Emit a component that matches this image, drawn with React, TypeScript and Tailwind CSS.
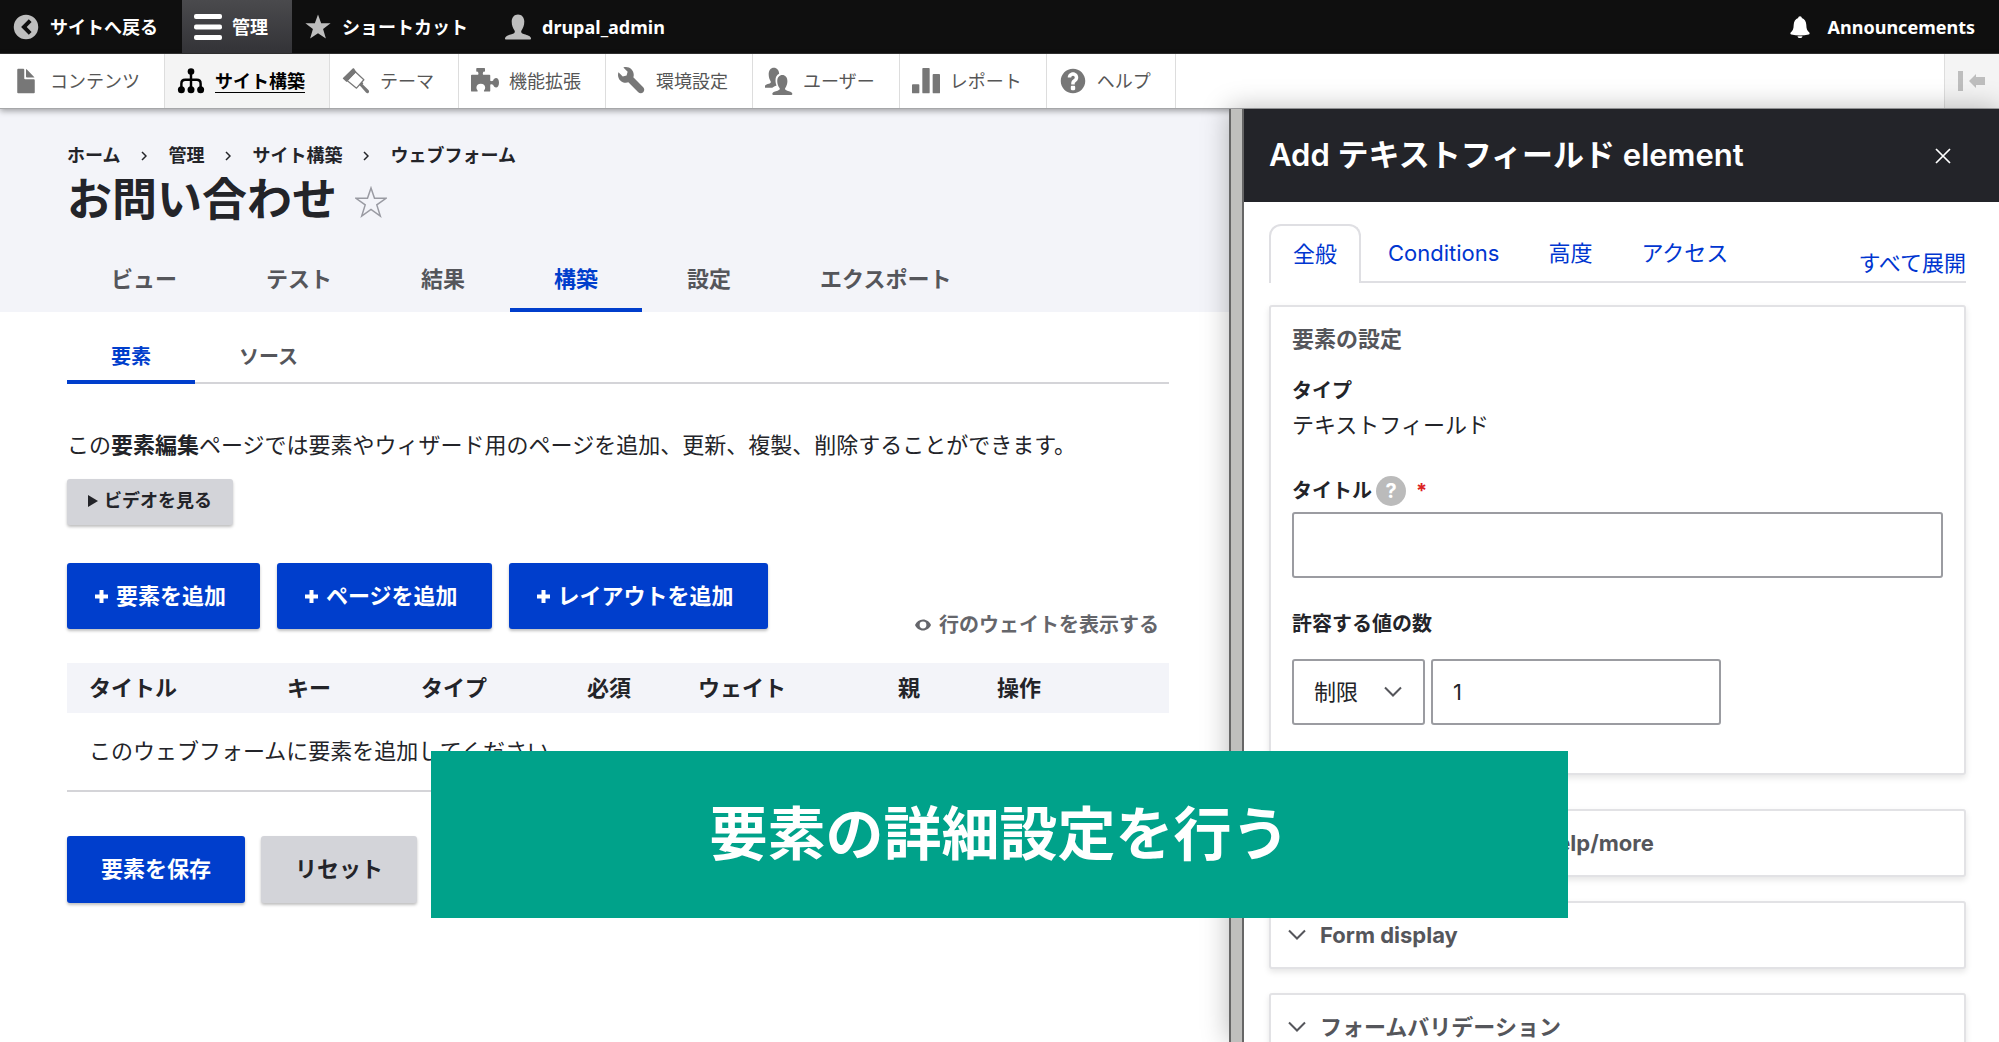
import type { ReactNode } from 'react';

const jp = "font-[Inter,'Noto_Sans_CJK_JP',sans-serif]";
const bar = "font-['Noto_Sans','Noto_Sans_CJK_JP',sans-serif]";

type IconProps = { className?: string };

function Svg({ children, className = 'size-7', box = '0 0 16 16' }: IconProps & { children: ReactNode; box?: string }) {
  return (
    <svg viewBox={box} className={`shrink-0 ${className}`} fill="currentColor" aria-hidden="true">
      {children}
    </svg>
  );
}

const BackIcon = () => (
  <Svg>
    <path fillRule="evenodd" d="M8 1a7 7 0 1 0 0 14A7 7 0 0 0 8 1zm1.6 11.4L5.2 8l4.4-4.4 1.6 1.6L8.4 8l2.8 2.8z" />
  </Svg>
);
const MenuIcon = () => (
  <Svg className="h-7 w-7" box="0 0 28 28">
    <rect y="1" width="28" height="5" rx="2" />
    <rect y="11.500" width="28" height="5" rx="2" />
    <rect y="22" width="28" height="5" rx="2" />
  </Svg>
);
const StarIcon = () => (
  <Svg>
    <path d="M8 .8l1.8 5h5.4l-4.3 3.4 1.6 5.4L8 11.500l-4.500 3.100 1.600-5.400L.8 5.800h5.400z" />
  </Svg>
);
const PersonIcon = () => (
  <Svg>
    <path d="M1.200 15.200c-.5 0-.7-.4-.6-.9.300-1.300 2.100-1.700 3.700-2.200 1.700-.5 2.200-1.100 1.700-2.100C5.200 8.900 4.400 7.300 4.400 4.900 4.400 2.400 5.900.8 8 .8s3.600 1.600 3.600 4.100c0 2.400-.8 4-1.600 5.100-.5 1 0 1.600 1.700 2.100 1.600.5 3.400.9 3.700 2.200.1.500-.1.900-.6.900z" />
  </Svg>
);
const BellIcon = () => (
  <Svg className="h-6 w-6">
    <path d="M8 .8c.7 0 1.200.5 1.200 1.200 1.900.6 2.900 2.300 3 4.500.1 2.700.5 4 2 5.100.4.300.3 1.200-.4 1.400-3.700.8-7.900.8-11.600 0-.7-.2-.8-1.100-.4-1.400 1.500-1.100 1.900-2.400 2-5.100.1-2.200 1.100-3.900 3-4.500C6.800 1.300 7.300.8 8 .8zM6.300 14.100h3.400c-.2.800-.8 1.300-1.700 1.300s-1.500-.5-1.700-1.300z" />
  </Svg>
);
const FileIcon = () => (
  <Svg>
    <path d="M12.502 7h-5c-.276 0-.502-.225-.502-.5v-5c0-.275-.225-.5-.5-.5h-3c-.276 0-.5.225-.5.5v13.029c0 .275.225.5.5.5h9.002c.275 0 .5-.225.5-.5v-7.029c0-.275-.225-.5-.5-.5zM8.502 6h4c.275 0 .34-.159.146-.354l-4.293-4.292c-.195-.195-.353-.129-.353.146v4c0 .275.225.5.5.5z" />
  </Svg>
);
const TreeIcon = () => (
  <Svg>
    <circle cx="8" cy="2.600" r="1.900" />
    <circle cx="2.500" cy="13" r="2" />
    <circle cx="8" cy="13" r="2" />
    <circle cx="13.500" cy="13" r="2" />
    <path d="M2.500 12V9.500Q2.500 7.300 4.700 7.300h6.600q2.200 0 2.200 2.200V12M8 3v9" fill="none" stroke="currentColor" strokeWidth="1.400" />
  </Svg>
);
const BrushIcon = () => (
  <Svg>
    <path d="M6.100.9L.7 6.100c-.3.300-.3.500 0 .8l1.900 1.700L8.200 2.800 6.900.9c-.2-.3-.5-.3-.8 0z" />
    <path d="M2.900 7.700l5.400 4.400 4.200-4.800L7.600 2.700z" fill="none" stroke="currentColor" strokeWidth=".7" strokeLinejoin="round" />
    <path d="M9.700 10.200l1.600-1.800.9.900-.4.600 3.300 3.300c.5.500.5 1.100.1 1.500-.4.400-1 .4-1.500-.1l-3-3.400z" />
  </Svg>
);
const PuzzleIcon = () => (
  <Svg>
    <path d="M0 4.900c0-.3.200-.5.500-.5h3.200c.5 0 .7-.4.500-.9L4 2.700h-.6c-.3 0-.4-.2-.4-.4V1c0-.3.200-.4.400-.4h4.200c.3 0 .4.200.4.400v1.300c0 .3-.2.400-.4.400H7l-.2.800c-.2.500 0 .9.500.9h3.200c.3 0 .5.200.5.500v2.500c0 .6.400.8 1 .6l.6-.2c.3-.9 1-1.500 1.700-1.500 1 0 1.700 1.100 1.700 2.700s-.7 2.700-1.700 2.700c-.7 0-1.400-.6-1.700-1.500l-.6-.2c-.6-.2-1 0-1 .6v2.900c0 .3-.2.500-.5.500H7.700c-.4 0-.4-.5-.1-.9.300-.4.500-.8.500-1.300 0-1.300-1-2.200-2.500-2.200s-2.500.9-2.500 2.200c0 .5.200.9.500 1.300.3.400.3.900-.1.900h-3c-.3 0-.5-.2-.5-.5z" />
  </Svg>
);
const WrenchIcon = () => (
  <Svg>
    <path d="M14.416 11.586l-.01-.008v-.001l-5.656-5.656c.15-.449.252-.921.252-1.421 0-2.485-2.016-4.500-4.502-4.500-.505 0-.981.102-1.434.255l2.431 2.431-.588 2.196-2.196.588-2.445-2.445c-.162.464-.268.956-.268 1.475 0 2.486 2.014 4.500 4.500 4.500.5 0 .972-.102 1.421-.251l5.667 5.665c.781.781 2.047.781 2.828 0s.781-2.047 0-2.828z" />
  </Svg>
);
const PeopleIcon = () => (
  <Svg>
    <path d="M.3 11.900c-.4 0-.6-.3-.5-.7.200-1 1.300-1.300 2.400-1.600 1-.3 1.400-.8 1-1.500-.6-.9-1.100-2.200-1.100-3.900C2.100 1.900 3.300.4 5.100.4c1.700 0 2.900 1.400 3 3.500C6.700 4.500 6 5.900 6 7.600c0 1.200.2 2.100.6 2.900-.9.400-1.900.7-2.500 1.400z" />
    <path d="M4.700 16c-.4 0-.6-.3-.5-.8.200-1 1.700-1.300 3-1.700 1.200-.4 1.500-.9 1.100-1.500-.7-.9-1.300-2.300-1.300-3.900 0-2.100 1.200-3.500 2.900-3.500s2.900 1.400 2.900 3.500c0 1.600-.6 3-1.200 3.900-.4.600-.1 1.100 1.100 1.500 1.200.4 2.700.7 2.900 1.700.1.500-.1.800-.5.800z" />
  </Svg>
);
const ChartIcon = () => (
  <Svg>
    <rect x="0" y="9.800" width="4.200" height="5.200" rx=".5" />
    <rect x="5.900" y="0.500" width="4.200" height="14.500" rx=".5" />
    <rect x="11.800" y="4" width="4.200" height="11" rx=".5" />
  </Svg>
);
const HelpIcon = () => (
  <Svg>
    <path d="M8.002 1c-3.868 0-7.002 3.134-7.002 7s3.134 7 7.002 7c3.865 0 7-3.134 7-7s-3.135-7-7-7zm3 5c0 .551-.16 1.085-.477 1.586l-.158.22c-.07.093-.189.241-.361.393-.168.148-.35.299-.545.447l-.203.189-.141.129-.096.17-.021.235v.63h-2.001v-.704c.026-.396.078-.73.204-.999.125-.269.271-.498.439-.688l.225-.21-.01-.015.176-.14.137-.128c.186-.139.357-.277.516-.417l.148-.18c.098-.152.168-.323.168-.518 0-.552-.447-1-1.001-1s-1.002.448-1.002 1h-2.001c0-1.657 1.344-3 3.003-3 1.655 0 3 1.343 3 3zm-1.750 6.619c0 .344-.281.625-.625.625h-1.250c-.345 0-.626-.281-.626-.625v-1.238c0-.344.281-.625.626-.625h1.250c.344 0 .625.281.625.625v1.238z" />
  </Svg>
);
const Chevron = ({ className = '' }: IconProps) => (
  <svg viewBox="0 0 18 12" className={`h-3 w-[18px] shrink-0 ${className}`} fill="none" stroke="currentColor" strokeWidth="2" aria-hidden="true">
    <path d="M1 1.500l8 8 8-8" />
  </svg>
);

const trayItems = [
  { label: 'コンテンツ', icon: <FileIcon /> },
  { label: 'サイト構築', icon: <TreeIcon />, active: true },
  { label: 'テーマ', icon: <BrushIcon /> },
  { label: '機能拡張', icon: <PuzzleIcon /> },
  { label: '環境設定', icon: <WrenchIcon /> },
  { label: 'ユーザー', icon: <PeopleIcon /> },
  { label: 'レポート', icon: <ChartIcon /> },
  { label: 'ヘルプ', icon: <HelpIcon /> },
];

function Toolbar() {
  return (
    <header className={`${bar} text-lg leading-7`}>
      <nav className="flex h-[54px] border-b border-[#333] bg-[#0f0f0f] font-bold text-white">
        <a href="#" className="flex items-center gap-2.5 pr-6 pl-3"><span className="text-[#bebebe]"><BackIcon /></span>サイトへ戻る</a>
        <a href="#" className="flex items-center gap-2.5 bg-linear-to-b from-[#4a4a4d] to-[#333337] pr-6 pl-3"><MenuIcon />管理</a>
        <a href="#" className="flex items-center gap-2.5 pr-6 pl-3"><span className="text-[#bebebe]"><StarIcon /></span>ショートカット</a>
        <a href="#" className="flex items-center gap-2.5 pr-6 pl-3"><span className="text-[#bebebe]"><PersonIcon /></span>drupal_admin</a>
        <a href="#" className="ml-auto flex items-center gap-4 pr-6 pl-3"><BellIcon />Announcements</a>
      </nav>
      <nav className="flex h-[55px] border-b border-[#a6a7a9] bg-white text-[#565656] shadow-[0_2px_6px_rgba(0,0,0,0.35)]">
        {trayItems.map((item) => (
          <a
            key={item.label}
            href="#"
            className={`flex items-center gap-2.5 border-r border-[#ddd] pr-6 pl-3 ${item.active ? 'bg-[#f4f4f4] font-bold text-black underline underline-offset-4' : ''}`}
          >
            <span className={item.active ? '' : 'text-[#777]'}>{item.icon}</span>
            {item.label}
          </a>
        ))}
        <button type="button" aria-label="縦方向" className="ml-auto w-[55px] border-l border-[#ddd] bg-[#f4f4f4] pl-3 text-[#bebebe]">
          <Svg className="h-6 w-7" box="0 0 28 24">
            <path d="M1 2h5v20H1zM12 12l7-7v3h9v8h-9v3z" />
          </Svg>
        </button>
      </nav>
    </header>
  );
}

const crumbs = ['ホーム', '管理', 'サイト構築', 'ウェブフォーム'];
const primaryTabs = ['ビュー', 'テスト', '結果', '構築', '設定', 'エクスポート'];
const columns = [
  { label: 'タイトル', width: 'w-[198px]' },
  { label: 'キー', width: 'w-[134px]' },
  { label: 'タイプ', width: 'w-[166px]' },
  { label: '必須', width: 'w-[111px]' },
  { label: 'ウェイト', width: 'w-[200px]' },
  { label: '親', width: 'w-[99px]' },
  { label: '操作', width: 'w-auto' },
];

const buttonBase = 'rounded-[3px] shadow-[0_2px_3px_rgba(0,0,0,0.25)] font-bold';

function AddButton({ label }: { label: string }) {
  return (
    <button type="button" className={`${buttonBase} flex h-[66px] items-center gap-2 bg-[#003ecc] pr-[34px] pl-7 text-[22px] text-white`}>
      <Svg className="size-[13px]" box="0 0 13 13">
        <path d="M4.500 0h4v4.500H13v4H8.500V13h-4V8.500H0v-4h4.500z" />
      </Svg>
      {label}
    </button>
  );
}

function Content() {
  return (
    <main className="min-w-0 flex-1">
      <div className="bg-[#f3f4f9] px-[67px] pt-[34px]">
        <nav className="flex items-center text-lg leading-[26px] font-bold">
          {crumbs.map((crumb, i) => (
            <span key={crumb} className="flex items-center">
              {i > 0 && (
                <svg viewBox="0 0 6 10" className="mx-[21px] h-2.5 w-1.5" fill="none" stroke="currentColor" strokeWidth="1.500" aria-hidden="true">
                  <path d="M1 1l4 4-4 4" />
                </svg>
              )}
              <a href="#">{crumb}</a>
            </span>
          ))}
        </nav>
        <div className="flex items-center gap-[18px]">
          <h1 className="text-[45px] leading-[62px] font-bold">お問い合わせ</h1>
          <button type="button" aria-label="ショートカットに追加" className="pt-1 text-[#9a9ba3]">
            <svg viewBox="0 0 32 32" className="size-8" fill="none" stroke="currentColor" strokeWidth="1.500" aria-hidden="true">
              <path d="M16 2l3.500 10.300H31l-9.200 6.600 3.500 11.100L16 23.400 6.700 30l3.500-11.100L1 12.300h11.500z" />
            </svg>
          </button>
        </div>
        <nav className="mt-[15px] flex gap-px text-[22px] font-bold text-[#55565b]">
          {primaryTabs.map((tab) => (
            <a key={tab} href="#" className={`flex h-[66px] items-center border-y-4 border-transparent px-11 ${tab === '構築' ? 'border-b-[#003ecc] text-[#003ecc]' : ''}`}>
              {tab}
            </a>
          ))}
        </nav>
      </div>
      <div className="px-[67px] pr-[60px]">
        <nav className="mt-[18px] flex text-xl font-bold text-[#55565b] shadow-[inset_0_-2px_0_#d4d4d8]">
          <a href="#" className="flex h-[54px] items-center border-y-4 border-transparent border-b-[#003ecc] px-11 text-[#003ecc]">要素</a>
          <a href="#" className="flex h-[54px] items-center border-y-4 border-transparent px-11">ソース</a>
        </nav>
        <p className="mt-11 text-[22px] leading-[34px]">
          この<strong>要素編集</strong>ページでは要素やウィザード用のページを追加、更新、複製、削除することができます。
        </p>
        <button type="button" className={`${buttonBase} mt-[17px] flex h-[46px] items-center gap-1.5 bg-[#d3d4d9] px-[21px] pb-0.5 text-lg`}>
          <Svg className="h-3 w-2.5" box="0 0 10 12"><path d="M0 0l10 6-10 6z" /></Svg>
          ビデオを見る
        </button>
        <div className="mt-[38px] flex items-end justify-between">
          <div className="flex gap-[17px] pb-[11px]">
            <AddButton label="要素を追加" />
            <AddButton label="ページを追加" />
            <AddButton label="レイアウトを追加" />
          </div>
          <button type="button" className="flex items-center gap-2 pr-2.5 text-xl leading-[30px] font-bold text-[#65666b]">
            <Svg className="h-3 w-4" box="0 0 16 12">
              <path fillRule="evenodd" d="M8 .5c3.600 0 6.500 2.300 8 5.500-1.500 3.200-4.400 5.500-8 5.500S1.500 9.200 0 6C1.500 2.800 4.400.5 8 .5zm0 2.100a3.400 3.400 0 1 0 0 6.800 3.400 3.400 0 0 0 0-6.800z" />
            </Svg>
            行のウェイトを表示する
          </button>
        </div>
        <table className="mt-[23px] w-full table-fixed text-left text-[22px]">
          <thead>
            <tr className="h-[50px] bg-[#f3f4f9]">
              {columns.map((c) => (
                <th key={c.label} className={`${c.width} pl-[22px] font-bold whitespace-nowrap`}>{c.label}</th>
              ))}
            </tr>
          </thead>
          <tbody>
            <tr className="h-[78px] border-b-2 border-[#d4d4d8]">
              <td colSpan={7} className="px-[22px]">このウェブフォームに要素を追加してください。</td>
            </tr>
          </tbody>
        </table>
        <div className="mt-11 flex gap-4 text-[22px]">
          <button type="submit" className={`${buttonBase} h-[67px] bg-[#003ecc] px-[34px] text-white`}>要素を保存</button>
          <button type="button" className={`${buttonBase} h-[67px] bg-[#d3d4d9] px-[34px]`}>リセット</button>
        </div>
      </div>
    </main>
  );
}

const cardBase = 'rounded-[3px] border-2 border-[#e2e2e5] bg-white shadow-[0_3px_6px_rgba(0,0,0,0.1)]';
const fieldBase = 'h-[66px] rounded-[3px] border-2 border-[#9b9ca1] bg-white text-[22px]';

function Collapsed({ label }: { label: string }) {
  return (
    <button type="button" className={`${cardBase} mb-6 flex h-[68px] w-full items-center gap-3.5 px-[17px] text-left text-[22px] font-bold text-[#55565b]`}>
      <Chevron />
      {label}
    </button>
  );
}

function Dialog() {
  return (
    <aside className="relative z-10 flex w-[770px] shrink-0 bg-white shadow-[0_0_26px_rgba(0,0,0,0.28)]">
      <div className="w-[15px] shrink-0 border-x-2 border-[#666] bg-[#bfbfbd]" />
      <div className="min-w-0 flex-1">
        <div className="flex h-[93px] items-center justify-between bg-[#232429] pr-12 pl-[25px] text-white">
          <h2 className="text-[31px] font-semibold">Add テキストフィールド element</h2>
          <button type="button" aria-label="閉じる">
            <svg viewBox="0 0 16 16" className="size-4" fill="none" stroke="currentColor" strokeWidth="1.700" aria-hidden="true">
              <path d="M1 1l14 14M15 1L1 15" />
            </svg>
          </button>
        </div>
        <div className="px-[25px] pt-[22px] pr-[33px]">
          <div className="flex justify-between text-[22px] text-[#0036d0] shadow-[inset_0_-2px_0_#dfdfe3]">
            <nav className="flex h-[59px] gap-[5px]">
              <a href="#" className="flex items-center rounded-t-xl border-2 border-b-0 border-[#dfdfe3] bg-white px-[22px]">全般</a>
              <a href="#" className="flex items-center px-[22px]">Conditions</a>
              <a href="#" className="flex items-center px-[22px]">高度</a>
              <a href="#" className="flex items-center px-[22px]">アクセス</a>
            </nav>
            <button type="button" className="pt-5">すべて展開</button>
          </div>
          <section className={`${cardBase} mt-[22px] mb-[34px] px-[21px] pt-[15px] pb-12`}>
            <h3 className="text-[22px] leading-[34px] font-bold text-[#55565b]">要素の設定</h3>
            <p className="mt-[18px] text-xl leading-[34px] font-bold">タイプ</p>
            <p className="text-[22px] leading-[34px]">テキストフィールド</p>
            <div className="mt-[33px] flex h-8 items-center">
              <label htmlFor="element-title" className="text-xl font-bold">タイトル</label>
              <button type="button" aria-label="ヘルプ" className="ml-1 size-[30px] rounded-full bg-[#bbb] text-xl leading-[30px] font-bold text-white">?</button>
              <span className="ml-2.5 text-xl leading-5 font-bold text-[#dc2323]">*</span>
            </div>
            <input id="element-title" type="text" className={`${fieldBase} mt-[5px] block w-full px-5`} />
            <label htmlFor="allowed-values" className="mt-[29px] block text-xl leading-[34px] font-bold">許容する値の数</label>
            <div className="mt-[18px] flex gap-[6px]">
              <div className="relative">
                <select id="allowed-values" className={`${fieldBase} w-[133px] appearance-none px-5`}>
                  <option>制限</option>
                </select>
                <Chevron className="pointer-events-none absolute top-[27px] right-[23px] text-[#55565b]" />
              </div>
              <input type="text" inputMode="numeric" aria-label="値の数" defaultValue="1" className={`${fieldBase} w-[290px] px-5`} />
            </div>
          </section>
          <Collapsed label="Element description/help/more" />
          <Collapsed label="Form display" />
          <Collapsed label="フォームバリデーション" />
        </div>
      </div>
    </aside>
  );
}

export default function App() {
  return (
    <div lang="ja" className={`${jp} relative flex h-screen flex-col overflow-hidden bg-white text-[#232429]`}>
      <div className="relative z-[5]"><Toolbar /></div>
      <div className="flex min-h-0 flex-1">
        <Content />
        <Dialog />
      </div>
      <div className="absolute inset-x-0 top-[751px] z-20 mx-auto flex h-[167px] w-[1137px] max-w-full items-center justify-center bg-[#00a28a] text-[58px] font-bold text-white">
        要素の詳細設定を行う
      </div>
    </div>
  );
}
